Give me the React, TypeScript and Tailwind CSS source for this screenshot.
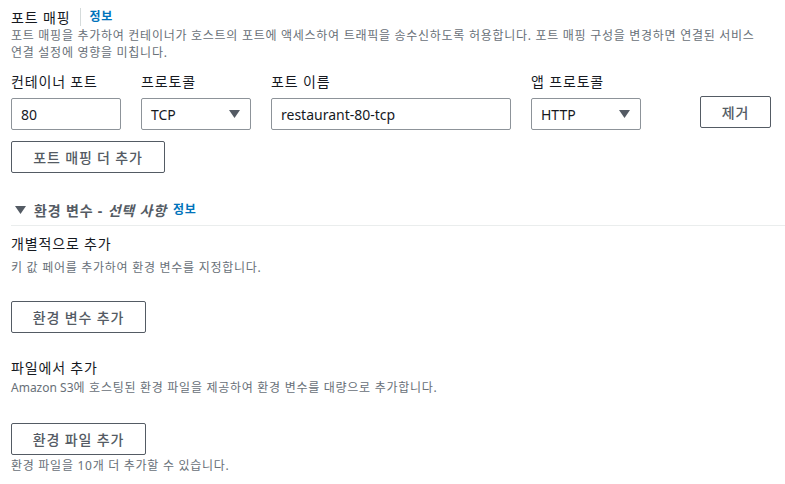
import React from "react";

const font = {
  fontFamily: '"Noto Sans", "Noto Sans CJK KR", sans-serif',
};

// Korean glyphs in the console render a little wider than Noto CJK
const ko = "tracking-[0.06em]";

function Caret() {
  return (
    <svg width="11" height="8" viewBox="0 0 11 8" className="fill-[#545b64]">
      <path d="M0 0h11L5.5 8z" />
    </svg>
  );
}

function Field({ label, width, children }: { label: string; width: string; children: React.ReactNode }) {
  return (
    <div className={`flex flex-col ${width}`}>
      <span className={`text-[14px] leading-[20px] text-[#16191f] mb-[6px] ${ko}`}>{label}</span>
      {children}
    </div>
  );
}

function TextBox({ value }: { value: string }) {
  return (
    <div className="h-[32px] border border-[#8d9399] rounded-[2px] px-[9px] flex items-center text-[14px] text-[#16191f]">
      {value}
    </div>
  );
}

function SelectBox({ value }: { value: string }) {
  return (
    <div className="h-[32px] border border-[#8d9399] rounded-[2px] pl-[9px] pr-[10px] flex items-center justify-between text-[14px] text-[#16191f]">
      <span>{value}</span>
      <Caret />
    </div>
  );
}

function Button({ children, className = "" }: { children: React.ReactNode; className?: string }) {
  return (
    <button
      className={`h-[32px] border border-[#545b64] rounded-[2px] bg-white text-[14px] font-medium text-[#545b64] flex items-center justify-center ${ko} ${className}`}
    >
      {children}
    </button>
  );
}

export default function App() {
  return (
    <div className="w-[785px] h-[484px] bg-white overflow-hidden pl-[11px]" style={font}>
      <div className="flex items-center h-[20px] mt-[7px]">
        <span className={`text-[14px] text-[#16191f] ${ko}`}>포트 매핑</span>
        <span className="w-px h-[18px] bg-[#d5dbdb] ml-[10px] mr-[8px]" />
        <span className={`text-[12px] font-bold text-[#0073bb] ${ko}`}>정보</span>
      </div>
      <p className={`text-[12px] leading-[17px] text-[#687078] pr-[14px] break-keep ${ko}`}>
        포트 매핑을 추가하여 컨테이너가 호스트의 포트에 액세스하여 트래픽을 송수신하도록 허용합니다. 포트 매핑 구성을 변경하면 연결된 서비스 연결 설정에 영향을 미칩니다.
      </p>

      <div className="flex items-end mt-[11px]">
        <Field label="컨테이너 포트" width="w-[110px]">
          <TextBox value="80" />
        </Field>
        <Field label="프로토콜" width="w-[110px] ml-[20px]">
          <SelectBox value="TCP" />
        </Field>
        <Field label="포트 이름" width="w-[240px] ml-[20px]">
          <TextBox value="restaurant-80-tcp" />
        </Field>
        <Field label="앱 프로토콜" width="w-[110px] ml-[20px]">
          <SelectBox value="HTTP" />
        </Field>
        <Button className="w-[71px] ml-[59px] mb-[2px]">제거</Button>
      </div>

      <Button className="w-[154px] mt-[11px]">포트 매핑 더 추가</Button>

      <div className="mt-[27px] flex items-center h-[20px] pl-[4px]">
        <Caret />
        <span className={`ml-[8px] text-[14px] font-bold text-[#545b64] ${ko}`}>
          환경 변수 - <i>선택 사항</i>
        </span>
        <span className={`ml-[6px] text-[12px] font-bold text-[#0073bb] ${ko}`}>정보</span>
      </div>
      <div className="mt-[5px] h-px bg-[#eaeded]" />

      <div className={`mt-[8px] text-[14px] leading-[20px] text-[#16191f] ${ko}`}>개별적으로 추가</div>
      <div className={`mt-[6px] text-[12px] leading-[16px] text-[#687078] ${ko}`}>키 값 페어를 추가하여 환경 변수를 지정합니다.</div>
      <Button className="w-[135px] mt-[25px]">환경 변수 추가</Button>

      <div className={`mt-[25px] text-[14px] leading-[20px] text-[#16191f] ${ko}`}>파일에서 추가</div>
      <div className={`mt-[2px] text-[12px] leading-[16px] text-[#687078] ${ko}`}>
        <span className="tracking-normal">Amazon S3</span>에 호스팅된 환경 파일을 제공하여 환경 변수를 대량으로 추가합니다.
      </div>
      <Button className="w-[135px] mt-[27px]">환경 파일 추가</Button>
      <div className={`mt-[3px] text-[12px] leading-[16px] text-[#687078] ${ko}`}>환경 파일을 10개 더 추가할 수 있습니다.</div>
    </div>
  );
}
